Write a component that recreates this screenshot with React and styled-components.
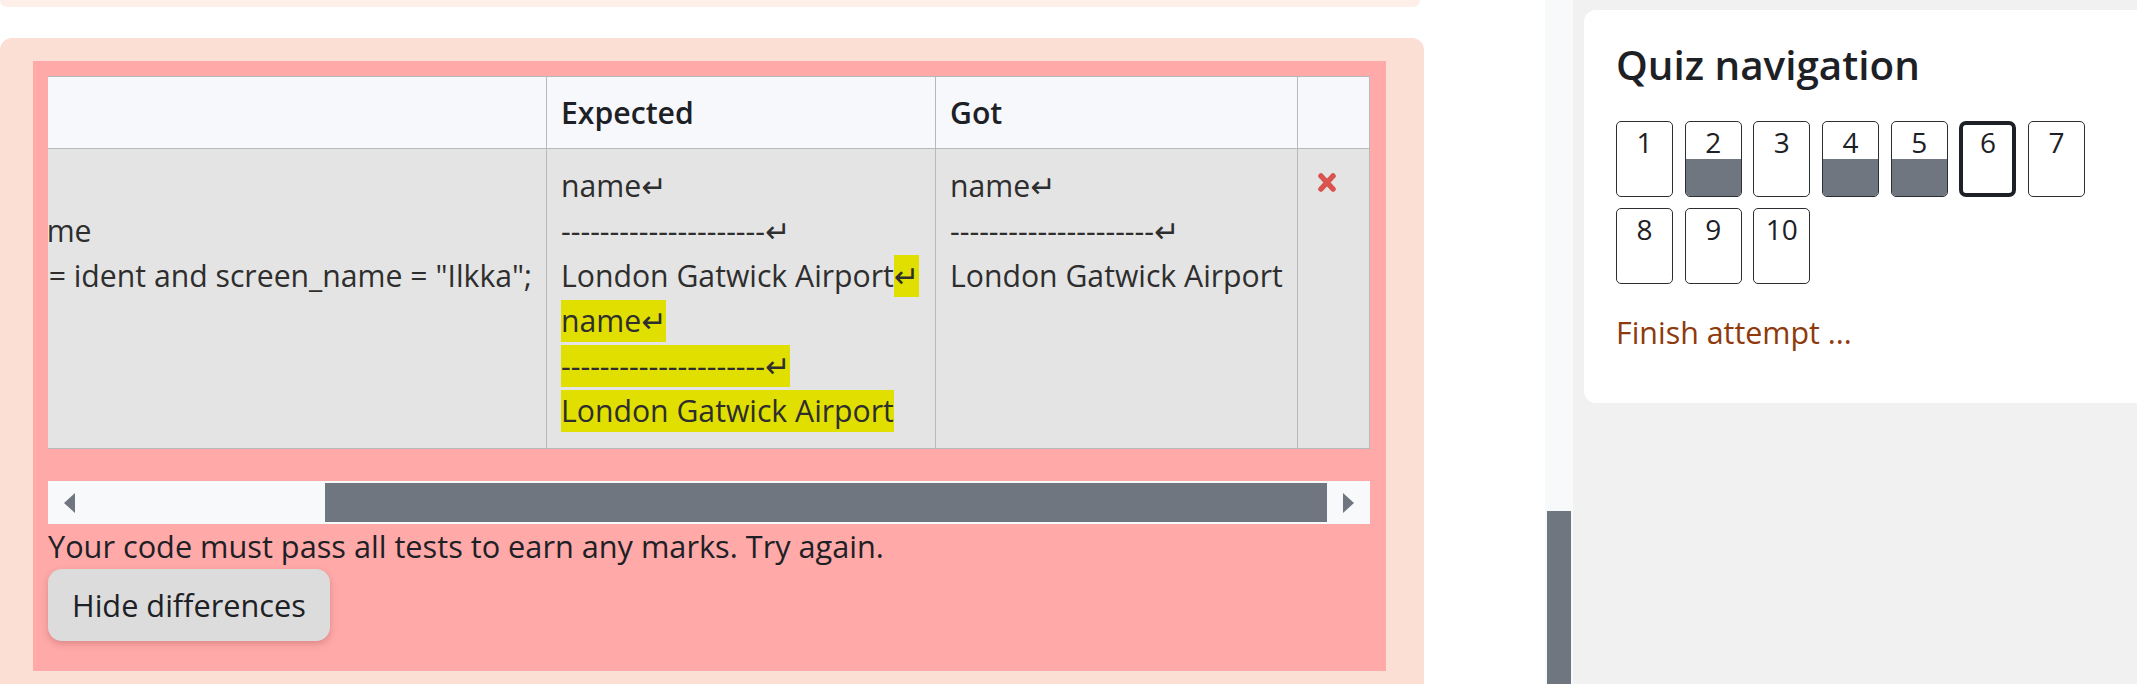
import React from 'react'
import styled, { createGlobalStyle } from 'styled-components'

const GlobalStyle = createGlobalStyle`
  html, body {
    margin: 0;
    padding: 0;
    background: #fff;
  }
  body {
    font-family: "Open Sans", "DejaVu Sans", sans-serif;
    color: #1d2125;
    overflow: hidden;
  }
`

const Page = styled.div`
  display: flex;
  width: 2137px;
  height: 684px;
  overflow: hidden;
`

const Main = styled.div`
  width: 1424px;
  flex-shrink: 0;
  display: flex;
  flex-direction: column;
  margin-right: 121px;
`

const PrevCard = styled.div`
  width: 1420px;
  height: 7px;
  background: #fef0e8;
  border-radius: 0 0 12px 12px;
  margin-bottom: 31px;
`

const Outcome = styled.div`
  flex: 1;
  background: #fcdfd4;
  border-radius: 12px 12px 0 0;
  padding: 23px 38px 0 33px;
`

const Feedback = styled.div`
  background: #ffa9a9;
  padding: 15px 16px 30px 15px;
`

const TableViewport = styled.div`
  display: flex;
  justify-content: flex-end;
  overflow: hidden;
`

const ResultTable = styled.table`
  flex-shrink: 0;
  border-collapse: collapse;
  font-size: 30.2px;
  color: #2e2e2e;
`

const HeadCell = styled.th`
  box-sizing: border-box;
  width: ${p => p.$width || 'auto'};
  height: 72px;
  padding: 0 14px;
  background: #f7f8fc;
  border: 1px solid #b9b9b9;
  text-align: left;
  font-weight: 600;
  color: #1d2125;
`

const BodyCell = styled.td`
  box-sizing: border-box;
  width: ${p => p.$width || 'auto'};
  padding: 14px 14px 15px;
  background: #e4e4e4;
  border: 1px solid #b9b9b9;
  vertical-align: top;
  line-height: 45px;
  white-space: pre;
`

const Line = styled.span`
  display: block;
`

const Mark = styled.span`
  display: inline-block;
  line-height: 42px;
  background: #e1df00;
`

const FailIcon = styled.svg`
  display: block;
  margin: 9px 0 0 5px;
`

const HScroll = styled.div`
  display: flex;
  align-items: center;
  height: 43px;
  margin-top: 32px;
  padding: 0 16px;
  background: #f8f9fa;
`

const Arrow = styled.span`
  width: 0;
  height: 0;
  border-top: 10.5px solid transparent;
  border-bottom: 10.5px solid transparent;
  ${p => (p.$dir === 'left'
    ? 'border-right: 11px solid #6f7680;'
    : 'border-left: 11px solid #6f7680;')}
`

const Rail = styled.div`
  flex: 1;
  align-self: stretch;
  display: flex;
  justify-content: flex-end;
  padding: 2px 0;
  margin: 0 16px;
`

const Thumb = styled.div`
  background: #6f7680;
`

const Message = styled.p`
  margin: 0;
  font-size: 30.7px;
  line-height: 45px;
  color: #1d2125;
`

const Button = styled.button`
  height: 72px;
  padding: 0 24px;
  border: none;
  border-radius: 14px;
  background: #dcdcdc;
  box-shadow: 0 3px 7px rgba(120, 40, 40, 0.25);
  font-family: inherit;
  font-size: 30.7px;
  font-weight: 500;
  color: #1d2125;
`

const PageScroll = styled.div`
  width: 28px;
  flex-shrink: 0;
  box-sizing: border-box;
  padding: 0 2px;
  background: #f8f9fa;
  display: flex;
  flex-direction: column;
`

const PageThumb = styled.div`
  margin-top: auto;
  height: 173px;
  background: #6f7680;
`

const Side = styled.div`
  flex: 1;
  background: #f1f1f1;
  padding: 10px 0 0 11px;
`

const NavCard = styled.div`
  box-sizing: border-box;
  height: 393px;
  padding: 32px 32px;
  background: #fff;
  border-radius: 12px 0 0 12px;
`

const NavTitle = styled.h3`
  margin: 0;
  font-size: 40.4px;
  font-weight: 600;
  line-height: 46px;
  color: #1d2125;
`

const NavGrid = styled.div`
  display: grid;
  grid-template-columns: repeat(7, 57px);
  column-gap: 11.7px;
  row-gap: 11px;
  margin-top: 33px;
`

const NavButton = styled.div`
  box-sizing: border-box;
  height: 76px;
  display: flex;
  flex-direction: column;
  overflow: hidden;
  border: ${p => (p.$current ? '4px solid #1d2125' : '1px solid #2b2f33')};
  border-radius: ${p => (p.$current ? '7px' : '5px')};
  background: #fff;
`

const NavNum = styled.span`
  height: ${p => (p.$current ? '34px' : '37px')};
  line-height: ${p => (p.$current ? '34px' : '40px')};
  text-align: center;
  font-size: 28px;
  color: #1d2125;
`

const NavFill = styled.span`
  flex: 1;
  background: ${p => (p.$answered ? '#6f7680' : 'transparent')};
`

const FinishLink = styled.a`
  display: block;
  margin-top: 28px;
  font-size: 30.4px;
  line-height: 42px;
  color: #8e3a0c;
  text-decoration: none;
`

const dashes = '---------------------'

const testLines = [
  'select name',
  'from airport,game',
  'where location = ident and screen_name = "Ilkka";',
]

const questions = [
  { n: 1 }, { n: 2, answered: true }, { n: 3 }, { n: 4, answered: true },
  { n: 5, answered: true }, { n: 6, current: true }, { n: 7 },
  { n: 8 }, { n: 9 }, { n: 10 },
]

const Cross = () => (
  <FailIcon width="20" height="21" viewBox="0 0 20 21">
    <path d="M4 4 L16 17 M16 4 L4 17" stroke="#d9534f" strokeWidth="5.5" strokeLinecap="round" />
  </FailIcon>
)

const App = () => {
  const thumbShare = 0.811
  return (
    <>
      <GlobalStyle />
      <Page>
        <Main>
          <PrevCard />
          <Outcome>
            <Feedback>
              <TableViewport>
                <ResultTable>
                  <thead>
                    <tr>
                      <HeadCell></HeadCell>
                      <HeadCell $width="389px">Expected</HeadCell>
                      <HeadCell $width="362px">Got</HeadCell>
                      <HeadCell $width="72px"></HeadCell>
                    </tr>
                  </thead>
                  <tbody>
                    <tr>
                      <BodyCell>
                        {testLines.map((l, i) => <Line key={i}>{l}</Line>)}
                      </BodyCell>
                      <BodyCell $width="389px">
                        <Line>name↵</Line>
                        <Line>{dashes}↵</Line>
                        <Line>London Gatwick Airport<Mark>↵</Mark></Line>
                        <Line><Mark>name↵</Mark></Line>
                        <Line><Mark>{dashes}↵</Mark></Line>
                        <Line><Mark>London Gatwick Airport</Mark></Line>
                      </BodyCell>
                      <BodyCell $width="362px">
                        <Line>name↵</Line>
                        <Line>{dashes}↵</Line>
                        <Line>London Gatwick Airport</Line>
                      </BodyCell>
                      <BodyCell $width="72px">
                        <Cross />
                      </BodyCell>
                    </tr>
                  </tbody>
                </ResultTable>
              </TableViewport>
              <HScroll>
                <Arrow $dir="left" />
                <Rail>
                  <Thumb style={{ width: `${thumbShare * 100}%` }} />
                </Rail>
                <Arrow $dir="right" />
              </HScroll>
              <Message>Your code must pass all tests to earn any marks. Try again.</Message>
              <Button>Hide differences</Button>
            </Feedback>
          </Outcome>
        </Main>
        <PageScroll>
          <PageThumb />
        </PageScroll>
        <Side>
          <NavCard>
            <NavTitle>Quiz navigation</NavTitle>
            <NavGrid>
              {questions.map(q => (
                <NavButton key={q.n} $current={q.current}>
                  <NavNum $current={q.current}>{q.n}</NavNum>
                  <NavFill $answered={q.answered} />
                </NavButton>
              ))}
            </NavGrid>
            <FinishLink href="#">Finish attempt ...</FinishLink>
          </NavCard>
        </Side>
      </Page>
    </>
  )
}

export default App
